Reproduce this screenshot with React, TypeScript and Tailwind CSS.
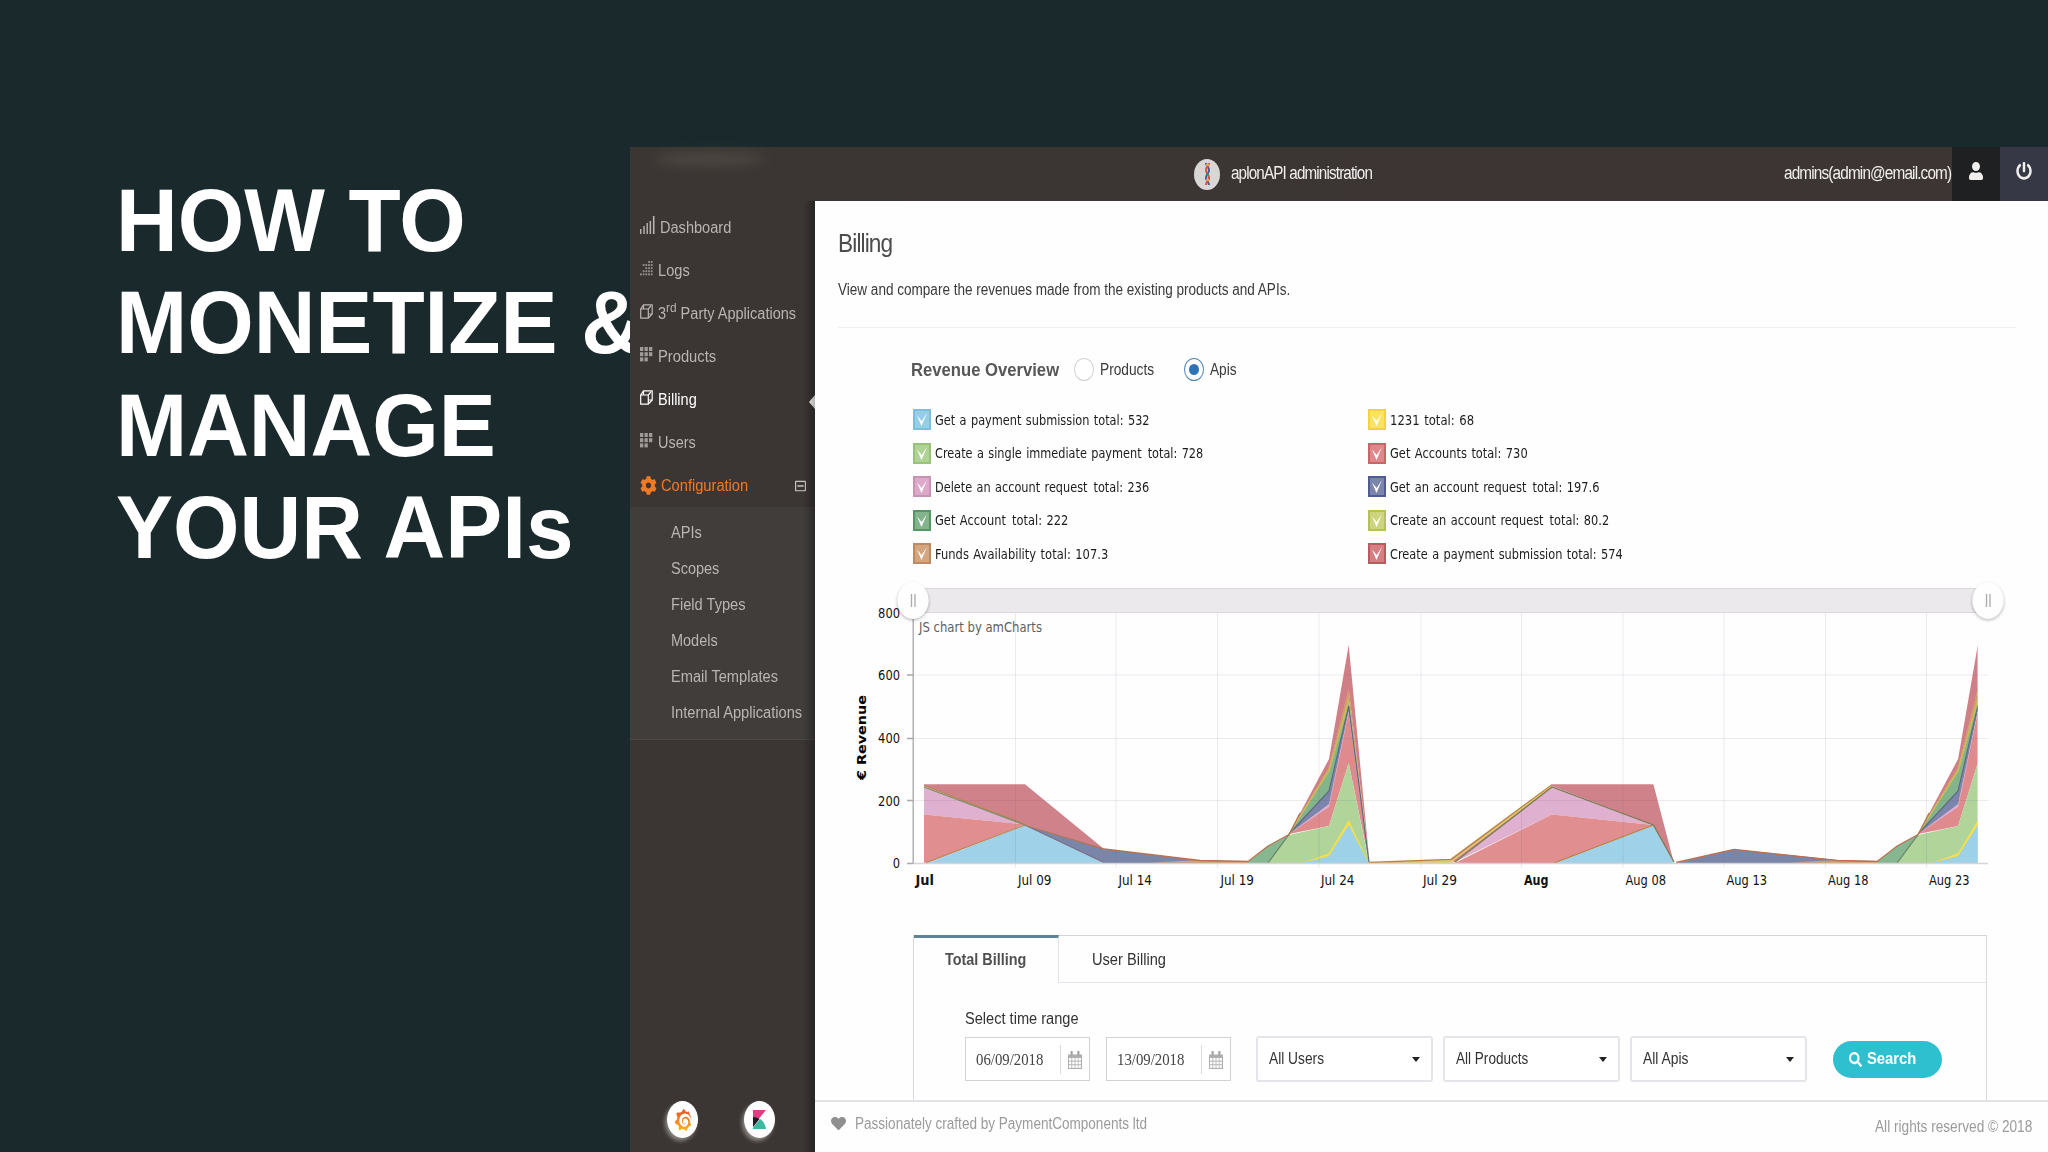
import React, { useLayoutEffect, useRef, useState } from 'react';
import { clsx } from 'clsx';
import { FaCog, FaHeart, FaPowerOff, FaRegMinusSquare, FaSearch, FaUser } from 'react-icons/fa';
import { SiGrafana } from 'react-icons/si';

interface FitProps {
  w: number;
  className?: string;
  children: React.ReactNode;
}

// Condenses its text horizontally so that it fills exactly `w` pixels
const Fit: React.FC<FitProps> = ({ w, className, children }) => {
  const ref = useRef<HTMLSpanElement>(null);
  const [scale, setScale] = useState(1);

  useLayoutEffect(() => {
    if (ref.current) {
      setScale(w / ref.current.offsetWidth);
    }
  }, [w]);

  return (
    <span className={clsx('inline-block shrink-0 whitespace-nowrap', className)} style={{ width: w }}>
      <span ref={ref} className="inline-block origin-left" style={{ transform: `scaleX(${scale})` }}>
        {children}
      </span>
    </span>
  );
};

const BarsIcon = () => (
  <svg className="-mt-[2px] h-[18px] w-[15px]" viewBox="0 0 15 18" fill="currentColor">
    <path d="M0 13h1.4v5H0zM3.3 10h1.4v8H3.3zM6.5 7h1.4v11H6.5zM9.6 5h1.500v13H9.600zM12.900 0h1.600v18h-1.600z" />
  </svg>
);

const StepsIcon = () => (
  <svg className="h-[15px] w-[13px]" viewBox="0 0 13 15" fill="currentColor" opacity={0.7}>
    {[
      [3, 0], [4, 0],
      [1, 1], [2, 1], [3, 1], [4, 1],
      [3, 2], [4, 2], [2, 2],
      [1, 3], [2, 3], [3, 3], [4, 3],
      [0, 4], [1, 4], [2, 4], [3, 4], [4, 4],
    ].map(([x, y]) => (
      <rect key={`${x}-${y}`} x={x * 2.7} y={y * 3.1} width={1.8} height={1.9} />
    ))}
  </svg>
);

const GridIcon = () => (
  <svg className="h-[15px] w-[13px]" viewBox="0 0 13 15" fill="currentColor" opacity={0.8}>
    {[[0, 0], [1, 0], [2, 0], [0, 1], [1, 1], [2, 1], [0, 2], [1, 2]].map(([x, y]) => (
      <rect key={`${x}-${y}`} x={x * 4.5} y={y * 5.2} width={3.3} height={4} />
    ))}
  </svg>
);

const CopyIcon = () => (
  <svg className="h-[15px] w-[13px]" viewBox="0 0 13 15" fill="none" stroke="currentColor" strokeWidth={1.2}>
    <path d="M.7 5h7.600v9.200H.7zM3.500 5V.8h8.700v9.200H8.300M.7 5 3.500 .8M8.300 14.200 12.200 10M8.300 5l2.500-3" />
  </svg>
);

const CalendarIcon = () => (
  <svg className="h-[18px] w-[14px]" viewBox="0 0 14 18">
    <path d="M0 3.500h14V18H0z" fill="#b0aeae" />
    <path d="M2.500 0h2.200v4.500H2.500zM9.300 0h2.200v4.500H9.300z" fill="#a5a3a3" />
    {[7, 10.6, 14.2].map((y) =>
      [1, 4.200, 7.400, 10.500].map((x) => (
        <rect key={`${x}-${y}`} x={x} y={y} width={2.400} height={2.700} fill="#fff" />
      ))
    )}
  </svg>
);

const menu = [
  { label: 'Dashboard', w: 71, icon: <BarsIcon /> },
  { label: 'Logs', w: 32, icon: <StepsIcon /> },
  { label: '3rd', w: 138, icon: <CopyIcon /> },
  { label: 'Products', w: 58, icon: <GridIcon /> },
  { label: 'Billing', w: 39, icon: <CopyIcon />, active: true },
  { label: 'Users', w: 38, icon: <GridIcon /> },
];

const submenu = [
  { label: 'APIs', w: 31 },
  { label: 'Scopes', w: 48 },
  { label: 'Field Types', w: 75 },
  { label: 'Models', w: 47 },
  { label: 'Email Templates', w: 107 },
  { label: 'Internal Applications', w: 131 },
];

const Sidebar = () => (
  <nav className="relative flex w-[185px] shrink-0 flex-col bg-[#3b3533] text-base text-[#b9b5b3]">
    <div className="mt-[5px]">
      {menu.map((item) => (
        <div
          key={item.label}
          className={clsx('flex h-[43px] items-center pl-[9.500px]', item.active && 'text-white')}
        >
          <span className="relative -top-0.5 flex">{item.icon}</span>
          <Fit w={item.w} className="ml-[5px]">
            {item.label === '3rd' ? (
              <>
                3<sup className="text-[13px]">rd</sup> Party Applications
              </>
            ) : (
              item.label
            )}
          </Fit>
          {item.active && (
            <span className="absolute right-0 mt-1 border-y-[7px] border-r-[6px] border-y-transparent border-r-white" />
          )}
        </div>
      ))}
      <div className="flex h-[43px] items-center pl-[9.500px] text-[#f37a25]">
        <FaCog className="h-[19px] w-[17px]" preserveAspectRatio="none" />
        <Fit w={87} className="ml-[4px]">Configuration</Fit>
        <FaRegMinusSquare className="ml-[47.500px] h-3 w-[11px] text-[#c9c5c3]" preserveAspectRatio="none" />
      </div>
    </div>
    <div className="h-[233px] border-b border-[#4b4846] bg-[#403d3b] pt-[8.500px]">
      {submenu.map((item) => (
        <div key={item.label} className="flex h-[35.900px] items-center pl-[41px]">
          <Fit w={item.w}>{item.label}</Fit>
        </div>
      ))}
    </div>
    <div className="mt-auto mb-[14px] flex gap-[46px] pl-[37px]">
      <span className="flex h-[37px] w-[31px] items-center justify-center rounded-[50%] bg-white shadow-[-2px_3px_4px_rgba(210,205,200,0.55)]">
        <svg className="absolute size-0">
          <linearGradient id="sun" x1="0" y1="0" x2="0" y2="1">
            <stop offset="0" stopColor="#e4512b" />
            <stop offset="1" stopColor="#f9b81f" />
          </linearGradient>
        </svg>
        <SiGrafana className="h-[22px] w-[18px] fill-[url(#sun)]" preserveAspectRatio="none" />
      </span>
      <span className="flex h-[37px] w-[31px] items-center justify-center rounded-[50%] bg-white shadow-[-2px_3px_4px_rgba(210,205,200,0.55)]">
        <svg className="h-[19px] w-[13px]" viewBox="0 0 13 19">
          <path d="M0 0h13L0 16z" fill="#e03f83" />
          <path d="M0 7c3 0 5 1 6.500 2L0 17z" fill="#1f1d22" />
          <path d="M7 9c3.500 2 5.500 6 6 10H0v-1.500z" fill="#3db9a1" />
        </svg>
      </span>
    </div>
    <div className="pointer-events-none absolute inset-y-0 right-0 -z-0 w-3 bg-linear-to-r from-transparent to-black/30" />
  </nav>
);

const TopBar = () => (
  <header className="relative flex h-[54px] shrink-0 items-center bg-linear-to-r from-[#3b3533] to-[#3c3533] text-lg tracking-[-1px] text-[#f1efee]">
    <span className="absolute top-1 left-6 h-4 w-28 rounded-[50%] bg-[#5a554d]/50 blur-[6px]" />
    <span className="ml-[564px] flex h-[31px] w-[26px] items-center justify-center rounded-[50%] bg-[#d9d7d6]">
      <svg className="h-[23px] w-[7px]" viewBox="0 0 7 23" fill="none" strokeWidth={2}>
        <path d="M2 0c0 4 3 3 3 7s-3 4-3 8 3 3 3 7" stroke="#3f5f9c" />
        <path d="M5 0c0 4-3 3-3 7s3 4 3 8-3 3-3 7" stroke="#d8523c" />
        <path d="M2 2h3M2 17h3" stroke="#efa23a" />
        <path d="M2 11h3" stroke="#2e8b76" />
      </svg>
    </span>
    <Fit w={141} className="-mt-[3px] ml-[11px]">aplonAPI administration</Fit>
    <Fit w={167} className="-mt-[3px] ml-auto">admins(admin@email.com)</Fit>
    <span className="ml-px flex h-full w-[48px] items-center justify-center bg-[#1e2022] pb-1.5">
      <FaUser className="h-[18px] w-[14px]" preserveAspectRatio="none" />
    </span>
    <span className="flex h-full w-[48px] items-center justify-center bg-[#373845] pb-1.5">
      <FaPowerOff className="h-[18px] w-[16px]" preserveAspectRatio="none" />
    </span>
  </header>
);

const legend = [
  { label: 'Get a payment submission total: 532', w: 214.500, fill: 'bg-[#94cfe6] border-[#7dbfdb]' },
  { label: '1231 total: 68', w: 84, fill: 'bg-[#fbe262] border-[#f3d33c]' },
  { label: 'Create a single immediate payment\u00a0 total: 728', w: 268, fill: 'bg-[#afd394] border-[#98c277]' },
  { label: 'Get Accounts total: 730', w: 138, fill: 'bg-[#de888b] border-[#c96467]' },
  { label: 'Delete an account request\u00a0 total: 236', w: 214, fill: 'bg-[#dda9c9] border-[#c794b4]' },
  { label: 'Get an account request\u00a0 total: 197.6', w: 209, fill: 'bg-[#7c86ad] border-[#505c90]' },
  { label: 'Get Account\u00a0 total: 222', w: 133, fill: 'bg-[#83b48c] border-[#569566]' },
  { label: 'Create an account request\u00a0 total: 80.2', w: 219, fill: 'bg-[#cdd47d] border-[#b5bf5c]' },
  { label: 'Funds Availability total: 107.3', w: 173.500, fill: 'bg-[#d4a57f] border-[#bd8a62]' },
  { label: 'Create a payment submission total: 574', w: 233, fill: 'bg-[#d57f83] border-[#bd5a60]' },
];

const Legend = () => (
  <div className="mt-[22px] ml-[98px] grid grid-cols-[455px_400px] font-['DejaVu_Sans',sans-serif] text-sm text-[#1c1c1c]">
    {legend.map((item) => {
      const [name, total] = item.label.split('\u00a0');
      return (
        <div key={item.label} className="flex h-[33.500px] items-center">
          <span className={clsx('flex h-[21px] w-[18px] items-center justify-center border-2', item.fill)}>
            <svg className="h-[13px] w-[10px] shrink-0" viewBox="0 0 10 13">
              <path d="M0 2.500 4.500 13 10 0 4.700 8z" fill="#fff" />
            </svg>
          </span>
          <Fit w={item.w} className="ml-1 [word-spacing:1px]">
            {name}
            {total && <span className="ml-0.5">{total}</span>}
          </Fit>
        </div>
      );
    })}
  </div>
);

const xLabels: [string, number, number][] = [
  ['Jul', 915.500, 18.500],
  ['Jul 09', 1018, 33.500],
  ['Jul 14', 1118.500, 33.500],
  ['Jul 19', 1220.400, 33.500],
  ['Jul 24', 1321, 33.500],
  ['Jul 29', 1423, 34],
  ['Aug', 1524, 24.500],
  ['Aug 08', 1625.500, 40.500],
  ['Aug 13', 1726.500, 40.500],
  ['Aug 18', 1828, 40.500],
  ['Aug 23', 1929, 40.500],
];

const yLabels: [string, number][] = [
  ['800', 612.500],
  ['600', 675],
  ['400', 738.300],
  ['200', 800.700],
  ['0', 863],
];

const gridX = [1015.500, 1116, 1217.500, 1319, 1421, 1521.500, 1623, 1724, 1825.500, 1926.500];

// Stacked spike at the end of each month: [fill, points]
const spike: [string, string][] = [
  ['#d17f86', '1289,834 1329,759 1348.7,645 1369.500,862 1348.7,690 1329,768'],
  ['#d39a70', '1289,834 1329,767 1348.7,688 1369.300,862 1348.7,699 1329,770'],
  ['#c9b85e', '1289,834 1329,769 1348.7,696 1369.200,862 1348.7,705 1329,773'],
  ['#83b48c', '1289,834 1329,772 1348.7,703 1369.200,862 1348.7,709 1329,792'],
  ['#7c86ad', '1289,834 1329,791 1348.7,707 1369.100,862 1348.7,712 1329,806'],
  ['#dfb0d3', '1289,834 1329,804 1348.7,711 1369,862 1348.7,716 1329,808'],
  ['#df8b8e', '1289,834 1329,807 1348.7,713 1369,862 1348.7,763 1329,826'],
  ['#b0d49a', '1268,863 1289,835 1329,826 1348.7,763 1369,863'],
  ['#86b791', '1248,862 1268,846 1289,835 1268,863 1248,863'],
  ['#f5df4c', '1303,863 1329,853 1348.7,820 1369,863 1348.7,826 1329,856'],
  ['#9dd1e8', '1303,863 1329,856.500 1348.7,825 1368,863'],
];

const Spike = () => (
  <g>
    {spike.map(([fill, points]) => (
      <polygon key={fill} points={points} fill={fill} />
    ))}
    <g fill="none" strokeWidth={1.200}>
      <path d="M1268 863 1289 834.500" stroke="#67805f" />
      <path d="M1289 834 1329 791 1348.700 706 1369 862" stroke="#5d6c7c" />
      <path d="M1289 834 1329 771 1348.700 701" stroke="#c8bd4e" />
      <path d="M1248 861.500 1268 846 1289 834.500 1300 813" stroke="#b9704e" />
    </g>
  </g>
);

const Handle: React.FC<{ cx: number }> = ({ cx }) => (
  <g>
    <ellipse cx={cx} cy={602} rx={16} ry={18.500} fill="#000" opacity={0.25} filter="url(#soft)" />
    <ellipse cx={cx} cy={600.500} rx={15.700} ry={18.500} fill="#fefefe" />
    <path d={`M${cx - 1.500} 594v13M${cx + 2} 594v13`} stroke="#aaa" strokeWidth={1.300} />
  </g>
);

const RevenueChart = () => (
  <svg
    className="mt-[4.500px] ml-[25px] block h-[320px] w-[1170px] font-['DejaVu_Sans',sans-serif]"
    viewBox="840 575 1170 320"
    fontSize={13.500}
  >
    <defs>
      <filter id="soft" x="-30%" y="-30%" width="160%" height="160%">
        <feGaussianBlur stdDeviation="1.500" />
      </filter>
      <clipPath id="plot">
        <rect x={913} y={612} width={1064.600} height={253} />
      </clipPath>
    </defs>

    <g clipPath="url(#plot)">
      <polygon points="924,784.300 1025,784.300 1104,849 1025,824.500 924,786" fill="#d0828a" />
      <polygon points="924,787 1025,824.500 924,814.500" fill="#dfb0cf" />
      <polygon points="924,814.500 1025,824.500 928,863 924,863" fill="#e08e90" />
      <polygon points="928,863 1025,825 1104,863" fill="#9fd2e8" />
      <polygon points="1025,825 1104,849 1200,860.500 1248,861.500 1248,863 1104,863" fill="#7a86a8" />
      <polygon points="1150,862.500 1200,860 1248,861.500 1248,863" fill="#dca25f" />
      <g fill="none" strokeWidth={1.300}>
        <path d="M924 785.300 1025 824.500M926 862.500 1025 825" stroke="#b98a55" />
        <path d="M924 787 1025 825" stroke="#7b8a60" />
        <path d="M1025 825 1104 862.500" stroke="#7b6f86" />
        <path d="M1025 825 1104 849 1200 860.500 1248 861.500" stroke="#b9704e" />
      </g>

      <polygon points="1369,863 1451,859.500 1458,862 1451,863" fill="#ddc77c" />
      <polygon points="1451,859.500 1552,784.300 1653.400,784.300 1674,863 1653.400,825 1552,786 1455,862" fill="#d0828a" />
      <polygon points="1455,862 1552,786 1653.400,825 1552,814.500" fill="#dfb0cf" />
      <polygon points="1455,863 1552,814.500 1653.400,825 1556,863" fill="#e08e90" />
      <polygon points="1556,863 1653.400,825 1674,863" fill="#9fd2e8" />
      <g fill="none" strokeWidth={1.300}>
        <path d="M1369 862.500 1451 859.300 1552 784.700M1554 863 1653.400 825" stroke="#b9803f" />
        <path d="M1452 861 1552 786" stroke="#e3cf6c" strokeWidth={1.500} />
        <path d="M1455 862 1552 787 1653.400 825 1674 862" stroke="#7b7a50" />
      </g>

      <polygon points="1676,863 1734,849.300 1837,860 1878,861.500 1878,863" fill="#7a86a8" />
      <polygon points="1790,862.500 1837,860 1878,861 1878,863" fill="#dca25f" />
      <path d="M1676 862.500 1734 849.300 1837 860.500 1878 861.500" fill="none" stroke="#b9704e" strokeWidth={1.300} />

      <Spike />
      <g transform="translate(629.100 0)">
        <Spike />
      </g>
    </g>

    <g stroke="#5a4a6a" strokeOpacity={0.11}>
      {gridX.map((x) => (
        <path key={x} d={`M${x} 612V868`} />
      ))}
      {[675, 738.500, 800.500].map((y) => (
        <path key={y} d={`M913 ${y}H1988`} />
      ))}
    </g>
    <path d="M913 863.500H1988" stroke="#d8d3da" strokeWidth={1.500} />
    <path d="M913.200 612V863.500M907 675h6M907 738.500h6M907 800.500h6M907 863.500h6" stroke="#aaa6ac" strokeWidth={1.300} />

    {yLabels.map(([label, y]) => (
      <text
        key={label}
        x={900}
        y={y + 5}
        textAnchor="end"
        textLength={label.length * 7.300}
        lengthAdjust="spacingAndGlyphs"
        fill="#111"
      >
        {label}
      </text>
    ))}
    {xLabels.map(([label, x, w]) => (
      <text
        key={label}
        x={x}
        y={884.500}
        textLength={w}
        lengthAdjust="spacingAndGlyphs"
        fontWeight={label.length === 3 ? 700 : 400}
        fill="#111"
      >
        {label}
      </text>
    ))}
    <text transform="translate(865.500 780) rotate(-90)" textLength={85} lengthAdjust="spacingAndGlyphs" fontWeight={700} fontSize={12.500}>
      € Revenue
    </text>

    <rect x={913} y={588} width={1075} height={24.500} fill="#ebe9eb" />
    <path d="M913 588.500H1988M913 612.500H1988" stroke="#dbd8dc" />
    <text x={919} y={632} textLength={123} lengthAdjust="spacingAndGlyphs" fill="#5f5f5f">
      JS chart by amCharts
    </text>
    <Handle cx={913} />
    <Handle cx={1988} />
  </svg>
);

const DateInput: React.FC<{ value: string; className?: string }> = ({ value, className }) => (
  <div className={clsx('flex h-[44px] w-[125px] items-center border border-[#d3d1d6] bg-white pt-px pl-[10px]', className)}>
    <Fit w={67} className="font-['Liberation_Serif',serif] text-[17px] text-[#444]">{value}</Fit>
    <span className="mr-[7px] ml-[17px] h-[29px] w-px bg-[#dcdade]" />
    <CalendarIcon />
  </div>
);

const SelectBox: React.FC<{ label: string; w: number; className?: string }> = ({ label, w, className }) => (
  <div className={clsx('flex h-[46px] w-[177px] items-center rounded-[3px] border-2 border-[#e6e4e9] bg-white pr-[11px] pl-[11px]', className)}>
    <Fit w={w}>{label}</Fit>
    <span className="ml-auto border-x-4 border-t-[5px] border-x-transparent border-t-[#222]" />
  </div>
);

const BillingPanel = () => (
  <section className="mt-10 ml-[97.500px] flex w-[1074.500px] flex-1 flex-col border-x border-[#dad8de] text-base text-[#333]">
    <div className="flex h-12">
      <div className="flex w-[145px] items-center border-t-[3px] border-r border-t-[#5d8593] border-r-[#e3e1ea] pl-[31.500px]">
        <Fit w={81} className="-mt-px font-bold text-[#505050]">Total Billing</Fit>
      </div>
      <div className="flex flex-1 items-center border-y border-t-[#d6d4d8] border-b-[#e6e4ec] pt-0.5 pl-[33px]">
        <Fit w={74}>User Billing</Fit>
      </div>
    </div>
    <Fit w={114} className="mt-6 ml-[51.500px]">Select time range</Fit>
    <div className="mt-[5px] ml-[51.500px] flex items-center">
      <DateInput value="06/09/2018" />
      <DateInput value="13/09/2018" className="ml-4" />
      <SelectBox label="All Users" w={55} className="ml-[25px]" />
      <SelectBox label="All Products" w={72} className="ml-2.5" />
      <SelectBox label="All Apis" w={45} className="ml-2.5" />
      <button className="ml-[26px] flex h-[37px] w-[109px] items-center rounded-full bg-[#2fc0d0] pl-4 font-bold text-white">
        <FaSearch className="h-[15px] w-[13px]" preserveAspectRatio="none" />
        <Fit w={49} className="ml-[5px]">Search</Fit>
      </button>
    </div>
  </section>
);

const Radio: React.FC<{ checked?: boolean }> = ({ checked = false }) => (
  <span
    className={clsx(
      'flex h-[23px] w-5 items-center justify-center rounded-[50%] border bg-white',
      checked ? 'border-[#4f86b5]' : 'border-[#d3d0d5]'
    )}
  >
    {checked && <span className="h-[11px] w-2.5 rounded-[50%] bg-[#2e74b2]" />}
  </span>
);

const Content = () => (
  <main className="flex flex-1 flex-col bg-[#fefefe] text-[#3a3a3a]">
    <Fit w={54} className="mt-[26px] ml-[23px] h-8 text-[26px] leading-8 tracking-[-1px] text-[#4c4c4c]">Billing</Fit>
    <Fit w={452} className="mt-[19px] ml-[23px] h-6">
      View and compare the revenues made from the existing products and APIs.
    </Fit>
    <div className="mt-[25px] mr-8 ml-[23px] h-px bg-[#f1eff2]" />
    <div className="mt-[29px] ml-[96px] flex h-6 items-center">
      <Fit w={148} className="pt-px text-lg font-bold text-[#575757]">Revenue Overview</Fit>
      <span className="w-[15px]" />
      <Radio />
      <Fit w={54} className="ml-1.5 pt-px">Products</Fit>
      <span className="w-[30px]" />
      <Radio checked />
      <Fit w={26.500} className="ml-1.5 pt-px">Apis</Fit>
    </div>
    <Legend />
    <RevenueChart />
    <BillingPanel />
    <footer className="flex h-[52px] shrink-0 items-center border-t-2 border-[#e3e1e6] pr-4 pl-4 text-[#9b9b9b]">
      <FaHeart className="-mt-2 h-[15px] w-[15px] text-[#8f8f8f]" preserveAspectRatio="none" />
      <Fit w={292} className="-mt-[7px] ml-[9px]">Passionately crafted by PaymentComponents ltd</Fit>
      <Fit w={157} className="-mt-px ml-auto">All rights reserved © 2018</Fit>
    </footer>
  </main>
);

export default function App() {
  return (
    <div className="flex h-[1152px] w-[2048px] overflow-hidden bg-[#1a292b] font-['Liberation_Sans',Arial,sans-serif]">
      <h1 className="w-[630px] shrink-0 origin-left scale-x-[0.966] pt-[170px] pl-[120px] text-[88.500px] leading-[102.400px] font-bold whitespace-nowrap text-white">
        HOW TO
        <br />
        MONETIZE &amp;
        <br />
        MANAGE
        <br />
        YOUR APIs
      </h1>
      <div className="relative z-10 mt-[147px] flex flex-1 flex-col">
        <TopBar />
        <div className="flex flex-1">
          <Sidebar />
          <Content />
        </div>
      </div>
    </div>
  );
}
